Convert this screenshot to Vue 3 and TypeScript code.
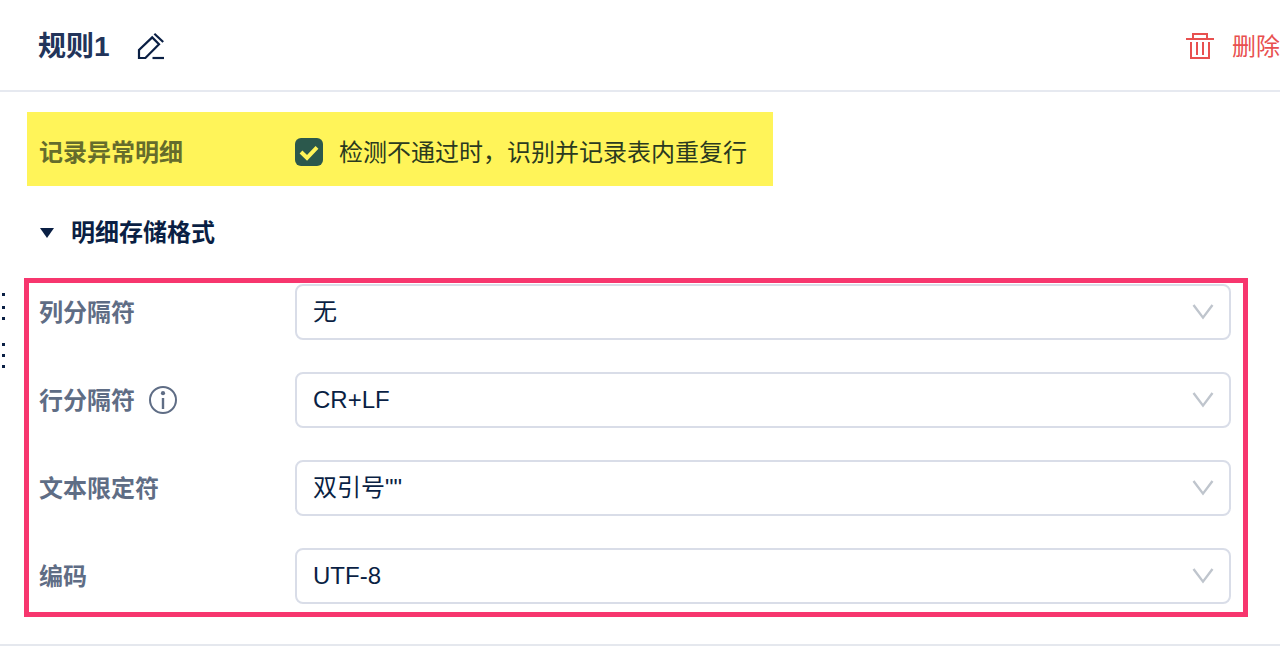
<!-- 规则编辑面板：异常明细记录与存储格式配置 -->
<template>
  <div class="rule-panel">
    <header class="panel-header">
      <h2 class="rule-name">{{ ruleName }}</h2>
      <button class="icon-button edit-button" aria-label="编辑">
        <svg width="28" height="28" viewBox="0 0 28 28" fill="none" stroke="currentColor" stroke-width="2.2">
          <path d="M2 25V17L15.2 4.4L22 11.2L8.4 25Z" />
          <path d="M17.4 0.8L26.2 9" />
          <path d="M15.5 25H27" />
        </svg>
      </button>
      <button class="icon-button delete-button">
        <svg width="28" height="28" viewBox="0 0 28 28" fill="none" stroke="currentColor" stroke-width="2">
          <path d="M0 6H28" />
          <path d="M7 6V1H21V6" />
          <path d="M5 9V25H23V9" />
          <path d="M11 9V22M17 9V22" />
        </svg>
        <span>删除</span>
      </button>
    </header>

    <main class="panel-body">
      <div class="record-row">
        <span class="record-label">记录异常明细</span>
        <label class="record-check">
          <input v-model="recordDetail" class="check-input" type="checkbox" />
          <span class="check-box" :class="{ checked: recordDetail }">
            <svg v-if="recordDetail" width="28" height="28" viewBox="0 0 28 28" fill="none">
              <path d="M6 14L12 19.8L22 9.4" stroke="#fff459" stroke-width="4" />
            </svg>
          </span>
          <span class="check-text">检测不通过时，识别并记录表内重复行</span>
        </label>
      </div>

      <div class="section-title" @click="expanded = !expanded">
        <span class="caret" :class="{ collapsed: !expanded }"></span>
        <span>明细存储格式</span>
      </div>

      <div v-if="expanded" class="format-box">
        <div v-for="field in fields" :key="field.label" class="format-row">
          <div class="format-label">
            <span class="label-text">{{ field.label }}</span>
            <svg v-if="field.hint" class="info-icon" width="28" height="28" viewBox="0 0 28 28" fill="none">
              <circle cx="14" cy="14" r="13" stroke="currentColor" stroke-width="2" />
              <circle cx="14" cy="7.2" r="2.1" fill="currentColor" />
              <path d="M14 12V23" stroke="currentColor" stroke-width="2.4" />
            </svg>
          </div>
          <div class="select">
            <span>{{ field.value }}</span>
            <svg width="22" height="16" viewBox="0 0 22 16" fill="none">
              <path d="M1.5 1L11 13.6L20.5 1" stroke="#bfc5cd" stroke-width="2.4" />
            </svg>
          </div>
        </div>
      </div>
    </main>

    <div class="drag-handle">
      <i v-for="n in 6" :key="n" class="dot"></i>
    </div>
  </div>
</template>

<script setup lang="ts">
import { ref } from 'vue'

interface FormatField {
  label: string
  value: string
  hint?: boolean
}

const ruleName = ref('规则1')
const recordDetail = ref(true)
const expanded = ref(true)

const fields = ref<FormatField[]>([
  { label: '列分隔符', value: '无' },
  { label: '行分隔符', value: 'CR+LF', hint: true },
  { label: '文本限定符', value: '双引号""' },
  { label: '编码', value: 'UTF-8' }
])
</script>

<style>
body {
  margin: 0;
  background-color: #fff;
}
</style>

<style scoped>
.rule-panel {
  position: relative;
  box-sizing: border-box;
  height: 646px;
  overflow: hidden;
  border-bottom: 2px solid #e5e8ee;
  color: #0a1f44;
  font-family: "Liberation Sans", "Noto Sans CJK SC", sans-serif;
  font-size: 24px;
  line-height: 36px;
}

.panel-header {
  display: flex;
  align-items: center;
  box-sizing: border-box;
  height: 92px;
  padding-top: 3px;
  padding-left: 38px;
  border-bottom: 2px solid #e6e9f0;
}

.rule-name {
  margin: 0;
  color: #22345a;
  font-size: 28px;
  font-weight: 700;
  white-space: nowrap;
}

.icon-button {
  display: flex;
  align-items: center;
  flex-shrink: 0;
  padding: 0;
  border: none;
  background: none;
  font: inherit;
  cursor: pointer;
}

.icon-button svg {
  overflow: visible;
}

.edit-button {
  margin-left: 27px;
  color: #0a1f44;
}

.delete-button {
  gap: 18px;
  margin-left: auto;
  color: #e8504f;
}

.panel-body {
  padding: 20px 32px 0 24px;
}

.record-row {
  display: flex;
  align-items: center;
  box-sizing: border-box;
  width: 746px;
  height: 74px;
  margin-left: 3px;
  padding: 6px 0 0 12px;
  background-color: #fff459;
}

.record-label {
  width: 256px;
  padding-top: 2px;
  color: #656c2c;
  font-weight: 700;
}

.record-check {
  display: flex;
  align-items: center;
  color: #2a3a20;
  white-space: nowrap;
  cursor: pointer;
}

.check-input {
  display: none;
}

.check-box {
  box-sizing: border-box;
  width: 28px;
  height: 28px;
  margin-right: 16px;
  border: 2px solid #2b584c;
  border-radius: 6px;
}

.check-box.checked {
  border: none;
  background-color: #2b584c;
}

.check-box svg {
  display: block;
}

.check-text {
  padding-top: 2px;
}

.section-title {
  display: flex;
  align-items: center;
  box-sizing: border-box;
  height: 92px;
  padding-top: 2px;
  padding-left: 15.5px;
  font-weight: 700;
  cursor: pointer;
}

.caret {
  margin-right: 17.5px;
  border-top: 10px solid #0a1f44;
  border-left: 7.5px solid transparent;
  border-right: 7.5px solid transparent;
}

.caret.collapsed {
  transform: rotate(-90deg);
}

.format-box {
  display: flex;
  flex-direction: column;
  gap: 32px;
  padding: 1px 12px 8px 10px;
  border: 5px solid #f7366e;
}

.format-row {
  display: flex;
}

.format-label {
  display: flex;
  align-items: center;
  flex-shrink: 0;
  width: 256px;
  color: #5f6d85;
  font-weight: 700;
}

.label-text {
  padding-top: 1px;
}

.info-icon {
  margin-left: 14px;
}

.select {
  display: flex;
  flex: 1;
  align-items: center;
  justify-content: space-between;
  box-sizing: border-box;
  height: 56px;
  padding: 0 15px 0 16px;
  border: 2px solid #d9dde8;
  border-radius: 8px;
  cursor: pointer;
}

.drag-handle {
  position: absolute;
  top: 293px;
  left: 2px;
  display: flex;
  flex-direction: column;
  gap: 8px;
}

.dot {
  width: 3px;
  height: 3px;
  background-color: #0a1f44;
}

.dot:nth-child(2) {
  margin-top: 2px;
}

.dot:nth-child(4) {
  margin-top: 15px;
}
</style>
